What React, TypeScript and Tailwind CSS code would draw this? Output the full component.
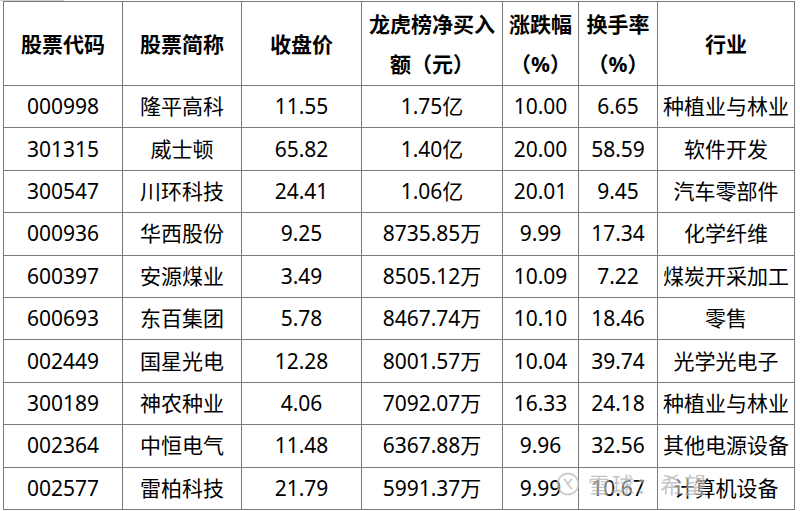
import React from "react";

const rows = [
  ["000998", "隆平高科", "11.55", "1.75亿", "10.00", "6.65", "种植业与林业"],
  ["301315", "威士顿", "65.82", "1.40亿", "20.00", "58.59", "软件开发"],
  ["300547", "川环科技", "24.41", "1.06亿", "20.01", "9.45", "汽车零部件"],
  ["000936", "华西股份", "9.25", "8735.85万", "9.99", "17.34", "化学纤维"],
  ["600397", "安源煤业", "3.49", "8505.12万", "10.09", "7.22", "煤炭开采加工"],
  ["600693", "东百集团", "5.78", "8467.74万", "10.10", "18.46", "零售"],
  ["002449", "国星光电", "12.28", "8001.57万", "10.04", "39.74", "光学光电子"],
  ["300189", "神农种业", "4.06", "7092.07万", "16.33", "24.18", "种植业与林业"],
  ["002364", "中恒电气", "11.48", "6367.88万", "9.96", "32.56", "其他电源设备"],
  ["002577", "雷柏科技", "21.79", "5991.37万", "9.99", "10.67", "计算机设备"],
];

const widths = [119, 119, 120, 141, 76, 79, 137];

export default function App() {
  return (
    <div className="relative w-[800px] h-[511px] bg-white overflow-hidden font-['Noto_Sans','Noto_Sans_CJK_SC',sans-serif] text-[21px] text-black">
      <div className="absolute left-0 top-0 w-[64px] h-[1px] bg-[#d0d0d0]" />
      <table className="ml-[3px] mt-[1px] w-[792px] table-fixed border-collapse">
        <colgroup>
          {widths.map((w, i) => (
            <col key={i} style={{ width: w }} />
          ))}
        </colgroup>
        <thead>
          <tr className="h-[84px] font-bold leading-[40px]">
            <th className="border border-[#7a7a7a] p-0">股票代码</th>
            <th className="border border-[#7a7a7a] p-0">股票简称</th>
            <th className="border border-[#7a7a7a] p-0">收盘价</th>
            <th className="border border-[#7a7a7a] p-0 whitespace-nowrap">
              龙虎榜净买入
              <br />
              额（元）
            </th>
            <th className="border border-[#7a7a7a] p-0">
              涨跌幅
              <br />
              （%）
            </th>
            <th className="border border-[#7a7a7a] p-0">
              换手率
              <br />
              （%）
            </th>
            <th className="border border-[#7a7a7a] p-0">行业</th>
          </tr>
        </thead>
        <tbody>
          {rows.map((r) => (
            <tr key={r[0]} className="h-[42.4px]">
              {r.map((c, j) => (
                <td key={j} className="border border-[#7a7a7a] p-0 text-center whitespace-nowrap leading-none">
                  {c}
                </td>
              ))}
            </tr>
          ))}
        </tbody>
      </table>
      {/* watermark */}
      <div className="absolute left-[556px] top-[472px] flex items-center gap-[8px] text-[#b4b4b4] opacity-75 [text-shadow:0_0_3px_#fff,0_0_3px_#fff]">
        <svg width="24" height="24" viewBox="0 0 24 24" fill="none" stroke="#bdbdbd" strokeWidth="1.8">
          <circle cx="12" cy="12" r="10.5" fill="#fff" fillOpacity="0.6" />
          <path d="M8 6.5 L16 17.5 M16 6.5 L11 13" />
        </svg>
        <span className="text-[22px] leading-none tracking-[2px]">雪球：希望</span>
      </div>
    </div>
  );
}
